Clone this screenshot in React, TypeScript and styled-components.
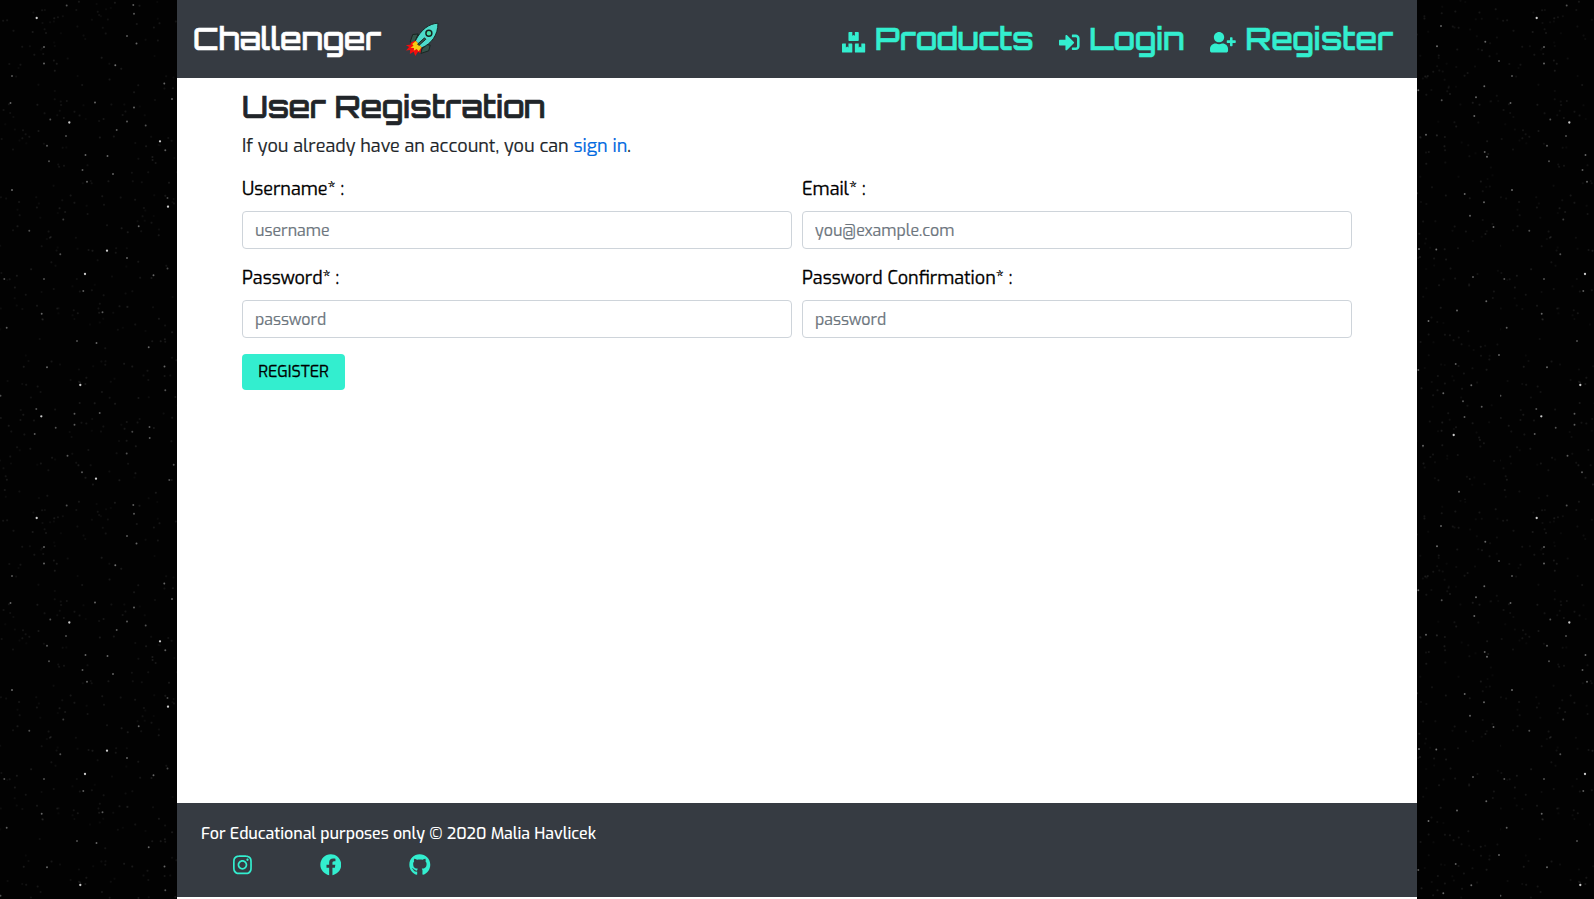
import React from 'react';
import styled, { createGlobalStyle } from 'styled-components';
import { FaBoxes, FaSignInAlt, FaUserPlus, FaInstagram, FaFacebook, FaGithub } from 'react-icons/fa';

const accent = '#33eecf';
const dark = '#363b42';
const display = `Orbitron, 'DejaVu Sans', sans-serif`;
const body = `Exo, 'Exo 2', Roboto, sans-serif`;

const Global = createGlobalStyle`
  *, *::before, *::after { box-sizing: border-box; }
  body { margin: 0; background: #020202; color: #212529; font-family: ${body}; font-size: 16px; line-height: 1.5; overflow: hidden; }
`;

const Sky = styled.svg`
  position: fixed;
  inset: 0;
  width: 100%;
  height: 100%;
  z-index: -1;
`;
const Page = styled.div`
  width: 1240px;
  height: 899px;
  margin: 0 auto;
  background: #fff;
  display: flex;
  flex-direction: column;
  padding-bottom: 2px;
`;
const Header = styled.header`
  height: 78px;
  flex: none;
  background: ${dark};
  display: flex;
  align-items: center;
  justify-content: space-between;
  padding: 0 24px 0 16px;
`;
const Brand = styled.a`
  display: flex;
  align-items: center;
  gap: 24px;
  color: #fff;
  text-decoration: none;
`;
const Display = styled.span`
  font: 500 31.1px/48px ${display};
  -webkit-text-stroke: 0.6px currentColor;
  margin-bottom: 1px;
  white-space: nowrap;
`;
const Nav = styled.nav`
  display: flex;
  gap: 25.5px;
`;
const NavLink = styled.a<{ $icon: number }>`
  display: flex;
  align-items: center;
  gap: 9.5px;
  color: ${accent};
  text-decoration: none;
  svg { height: 20.6px; width: ${(p) => p.$icon}px; margin-top: 7px; }
`;
const Main = styled.main`
  flex: 1;
  padding: 10px 65px 0;
`;
const Title = styled.h1`
  margin: 0;
  font: 500 31.1px/38px ${display};
  -webkit-text-stroke: 0.7px currentColor;
`;
const Intro = styled.p`
  margin: 7px 0 16px;
  font-size: 18px;
  line-height: 27px;
  -webkit-text-stroke: 0.2px currentColor;
  a { color: #0069e0; text-decoration: none; }
`;
const Form = styled.form`
  display: grid;
  grid-template-columns: 1fr 1fr;
  gap: 16px 10px;
`;
const Field = styled.label`
  display: flex;
  flex-direction: column;
  gap: 8px;
  color: #000;
  font-size: 18px;
  line-height: 27px;
  -webkit-text-stroke: 0.3px currentColor;
`;
const Input = styled.input`
  height: 38px;
  border: 1px solid #ced4da;
  border-radius: 4px;
  padding: 6px 12px;
  font: 16px/24px ${body};
  -webkit-text-stroke: 0.2px #6c757d;
  &::placeholder { color: #6c757d; opacity: 1; }
`;
const Submit = styled.button`
  justify-self: start;
  width: 103px;
  height: 36px;
  border: 0;
  border-radius: 4px;
  background: ${accent};
  color: #000;
  font: 16px/24px ${body};
  -webkit-text-stroke: 0.3px currentColor;
  padding: 0;
`;
const Footer = styled.footer`
  height: 94px;
  flex: none;
  background: ${dark};
  color: #fff;
  padding: 19px 24px;
`;
const Credit = styled.p`
  margin: 0;
  font-weight: 500;
  font-size: 16px;
  letter-spacing: -0.03px;
  line-height: 24px;
`;
const Social = styled.div`
  display: flex;
  padding: 8px 0 0 32px;
  gap: 67.8px;
  color: ${accent};
  svg { height: 21.6px; width: 21.6px; flex: none; }
  svg:first-child { width: 18.9px; }
`;

/* One 500 x 500 tile of sky: x, y, brightness. */
const stars: number[][] = [
  [36.7, 18, 1], [69.3, 122.5, 1], [160, 141.3, 1], [168, 206.7, 1], [107, 250.7, 1], [85, 274, 1],
  [80.3, 385, 1], [41.3, 416.3, 1], [96, 478.7, 1], [453.7, 435, 1],
  [44, 47, .5], [44, 63.5, .5], [12, 76, .45], [10.5, 103, .5], [95, 102.5, .5], [115.3, 65.3, .55],
  [127, 36, .45], [136.5, 43.5, .5], [133.3, 5, .45], [134, 13.7, .45], [66.7, 5.5, .4], [164.3, 83.5, .5],
  [172, 99, .5], [134, 107.5, .5], [127, 121.5, .45], [116.7, 130, .45], [145.7, 125.5, .4], [50.3, 119.5, .4],
  [66, 136, .4], [47, 145.7, .45], [165.3, 150.3, .45], [85.5, 155, .5], [107.5, 156, .5], [49, 161.3, .4],
  [82.5, 170, .45], [113, 174, .5], [87, 181.7, .5], [12, 190, .55], [63.3, 219.5, .3], [167.5, 198, .35],
  [138.7, 226.3, .5], [29.3, 230.7, .4], [60.3, 254.3, .4], [127, 258, .5], [167.5, 268.5, .35], [153.5, 275.3, .5],
  [4.3, 279, .4], [44, 279, .4], [83.3, 291, .45], [102.5, 312.3, .45], [41.7, 313.7, .5], [6.7, 327.7, .45],
  [77, 341, .4], [96.5, 343, .5], [148.7, 347.3, .5], [47, 367.3, .5], [164.5, 366.5, .5], [165.3, 390.3, .4],
  [0.5, 395.7, .4], [36.3, 409, .4], [74.5, 413.7, .45], [99.7, 413, .45], [74.5, 424.7, .45], [55.7, 427.7, .4],
  [34.7, 434, .45], [149.5, 427, .45], [149.7, 438, .45], [132.3, 431.7, .35], [67.5, 455.7, .45], [126.7, 453.5, .4],
  [82, 472.3, .45], [173.7, 464.7, .4], [169.3, 480, .4],
  [464.7, 194, .5], [484, 202.3, .5], [470, 215.7, .5], [493.5, 227, .5], [419, 249, .55], [436.3, 249.5, .55],
  [473, 277, .45], [486.3, 301.3, .5], [457, 310.5, .5], [428.5, 321, .55], [499, 355, .5], [455.7, 364, .45],
  [418.3, 370, .45], [471.3, 385.3, .5], [443.3, 393.3, .5], [463, 401.3, .45], [481.7, 406.7, .45], [464.5, 417, .45],
  [423, 445.7, .5], [459, 491.7, .5], [441, 26, .5], [437, 46.3, .55], [485.3, 41.7, .5], [499, 61, .4],
  [418.3, 90.3, .5], [484.3, 86.3, .5], [476, 97.3, .5], [441.7, 100.3, .4], [474.3, 116, .5], [426, 134.7, .5],
  [484.7, 152, .45], [487, 156.7, .55],
];

/* Faint dust between the stars, from a fixed seed. */
const dust: number[][] = [];
let seed = 7;
const random = () => (seed = (seed * 16807) % 2147483647) / 2147483647;
for (let i = 0; i < 1100; i++) dust.push([random() * 500, random() * 500, 0.03 + random() * 0.08]);

const Starfield = () => (
  <Sky>
    <defs>
      <pattern id="sky" width="500" height="500" patternUnits="userSpaceOnUse">
        <rect width="500" height="500" fill="#020202" />
        {dust.map(([x, y, o], i) => <circle key={i} cx={x} cy={y} r={1} fill="#ddd" opacity={o} />)}
        {stars.map(([x, y, o], i) => <circle key={i} cx={x} cy={y} r={o === 1 ? 1.15 : 0.95} fill="#eee" opacity={o === 1 ? 0.85 : o * 0.85} />)}
      </pattern>
    </defs>
    <rect width="100%" height="100%" fill="url(#sky)" />
  </Sky>
);

const Rocket = () => (
  <svg width="35" height="35" viewBox="0 0 34 34" stroke="#17231f" strokeWidth="0.9" strokeLinejoin="round">
    <path d="M12.8 11.6 7.5 12.2 5 19.5 9 20.5Z M21.5 22 24.5 22.5 23 28 15.5 30.5 16.5 26Z" fill="#35544a" />
    <path d="M32 1.2C24 1.4 15.5 7 10 18.5L16 25.2C26 21 32 12.5 32 1.2Z" fill="#4ddccb" />
    <path d="M10 18 5.5 20.2 5.8 21.8 .8 22.5 4 24.4 1 27.6 5 27.2 4.7 31 8.4 28.8 10 33 12.7 29 14.9 30 16 24.5Z" fill="#f20d0d" stroke="none" />
    <path d="M10.5 18.5 7 21.3 8.3 23 5.3 25 8.8 25.2 8.5 28 11.3 26.3 13.3 28.5 16 24.5Z" fill="#f6cc12" stroke="none" />
    <path d="M19 15.4 12.3 21.4 13.5 22.8 20.2 16.8Z" fill="#35544a" />
    <circle cx="23.2" cy="11" r="2.9" fill="#45e0a8" strokeWidth="1.4" />
  </svg>
);

const TextField = ({ label, hint, type = 'text' }: { label: string; hint: string; type?: string }) => (
  <Field>
    {label}
    <Input type={type} placeholder={hint} />
  </Field>
);

export default function App() {
  return (
    <>
      <Global />
      <Starfield />
      <Page>
        <Header>
          <Brand><Display>Challenger</Display><Rocket /></Brand>
          <Nav>
            <NavLink $icon={23.2}><FaBoxes /><Display>Products</Display></NavLink>
            <NavLink $icon={20.6}><FaSignInAlt /><Display>Login</Display></NavLink>
            <NavLink $icon={25.8}><FaUserPlus /><Display>Register</Display></NavLink>
          </Nav>
        </Header>
        <Main>
          <Title>User Registration</Title>
          <Intro>If you already have an account, you can <a>sign in</a>.</Intro>
          <Form>
            <TextField label="Username* :" hint="username" />
            <TextField label="Email* :" hint="you@example.com" type="email" />
            <TextField label="Password* :" hint="password" type="password" />
            <TextField label="Password Confirmation* :" hint="password" type="password" />
            <Submit type="button">REGISTER</Submit>
          </Form>
        </Main>
        <Footer>
          <Credit>For Educational purposes only © 2020 Malia Havlicek</Credit>
          <Social><FaInstagram /><FaFacebook /><FaGithub /></Social>
        </Footer>
      </Page>
    </>
  );
}
